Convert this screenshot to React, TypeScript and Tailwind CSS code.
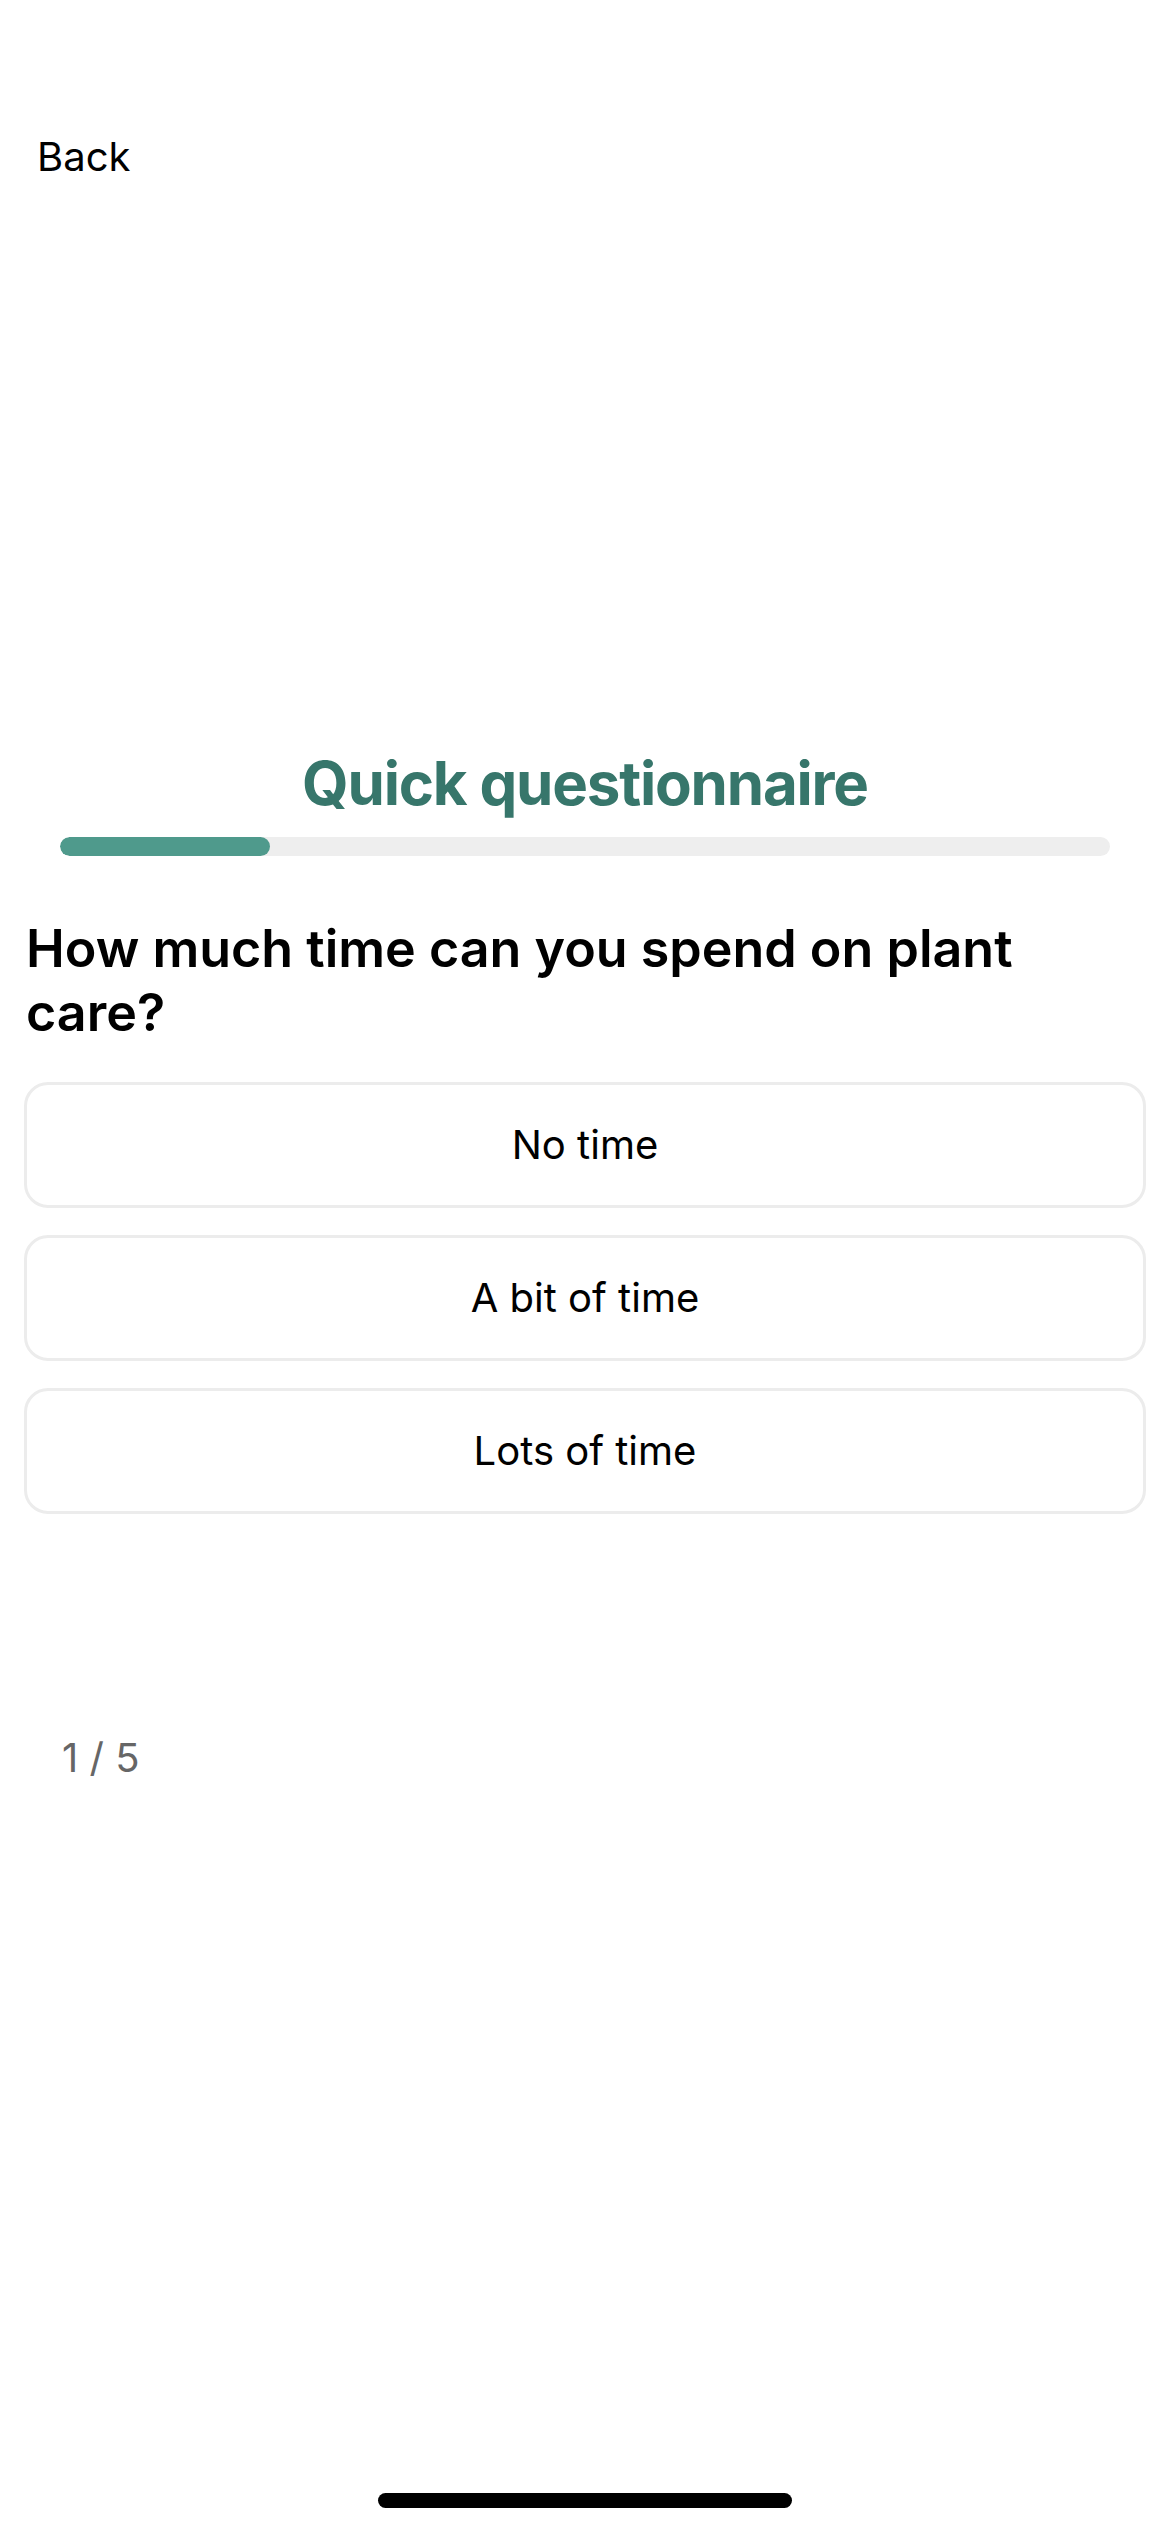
import React from 'react';

const options = ['No time', 'A bit of time', 'Lots of time'];

export default function App() {
  const step = 1;
  const total = 5;

  return (
    <div className="relative w-[1170px] h-[2532px] bg-white font-['Inter','Liberation_Sans',sans-serif] text-black overflow-hidden">
      {/* Header */}
      <div className="pt-[132px] pl-[37px]">
        <button className="text-[40px] leading-[50px] text-black">Back</button>
      </div>

      {/* Title + progress */}
      <h1 className="mt-[565px] text-center text-[60px] leading-[72px] font-bold tracking-[-0.02em] text-[#37766b]">
        Quick questionnaire
      </h1>
      <div className="mt-[18px] mx-[60px] h-[19px] rounded-full bg-[#eeeeee] overflow-hidden">
        <div className="h-full w-[20%] rounded-full bg-[#4f9a8c]" />
      </div>

      {/* Question */}
      <h2 className="mt-[61px] pl-[26px] pr-[120px] text-[52px] leading-[64px] font-semibold">
        How much time can you spend on plant care?
      </h2>

      {/* Answers */}
      <div className="mt-[37px] mx-[24px] flex flex-col gap-[27px]">
        {options.map((o) => (
          <button
            key={o}
            className="h-[126px] w-full flex items-center justify-center rounded-[24px] border-[3px] border-[#ececec] bg-white text-[40px] leading-[48px]"
          >
            {o}
          </button>
        ))}
      </div>

      {/* Step counter */}
      <div className="mt-[220px] pl-[62px] text-[40px] leading-[48px] text-[#666666]">
        {step} / {total}
      </div>

      {/* Home indicator */}
      <div className="absolute left-[378px] bottom-[24px] w-[414px] h-[15px] rounded-full bg-black" />
    </div>
  );
}
